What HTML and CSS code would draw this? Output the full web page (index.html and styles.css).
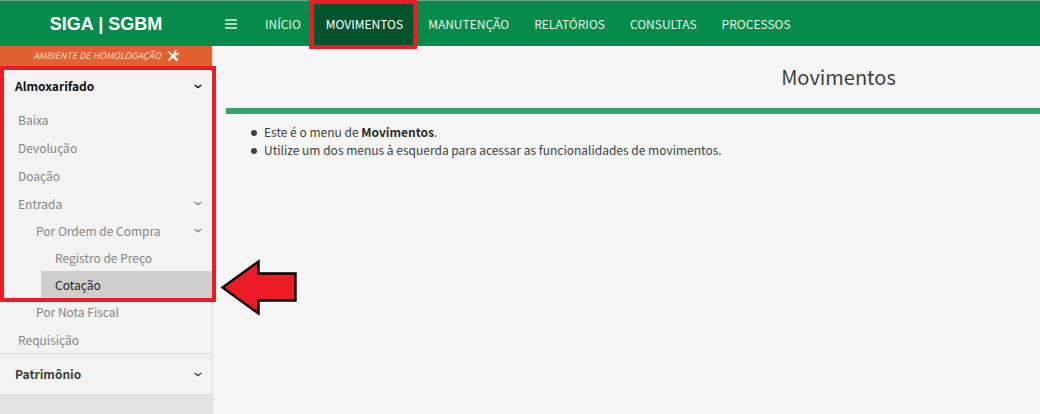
FILE: index.html
```html
<!DOCTYPE html>
<html lang="pt-BR">
<head>
<meta charset="utf-8">
<title>SIGA | SGBM</title>
<link rel="stylesheet" href="styles.css">
</head>
<body>
<svg class="sprite" aria-hidden="true">
  <symbol id="chevron" viewBox="0 0 8 5"><path d="M.7 1L4 3.600 7.300 1" fill="none" stroke="currentColor" stroke-width="1.3"/></symbol>
</svg>
<header class="topbar">
  <a class="brand" href="#">SIGA | SGBM</a>
  <button class="toggle" type="button" aria-label="Menu">
    <svg width="12" height="10" viewBox="0 0 12 10"><path d="M0 1h12M0 5h12M0 9h12" stroke="currentColor" stroke-width="1.7"/></svg>
  </button>
  <nav class="nav">
    <a href="#">INÍCIO</a>
    <a class="active" href="#">MOVIMENTOS</a>
    <a href="#">MANUTENÇÃO</a>
    <a href="#">RELATÓRIOS</a>
    <a href="#">CONSULTAS</a>
    <a href="#">PROCESSOS</a>
  </nav>
</header>
<div class="layout">
  <aside class="sidebar">
    <div class="ribbon"><em>AMBIENTE DE HOMOLOGAÇÃO</em>
      <svg width="12" height="12" viewBox="0 0 12 12" aria-hidden="true">
        <path d="M1.2 1.2L6 6" stroke="#fff" stroke-width="1.6"/>
        <path d="M6.5 6.5L10.6 10.6" stroke="#fff" stroke-width="2.6"/>
        <path d="M1.6 10.4L8.2 3.8" stroke="#fff" stroke-width="2"/>
        <path d="M10 .4L8.5 2l.2 1.3 1.3.2 1.6-1.6c.6 1.7-.5 3.6-2.4 3.5C7.400 5.300 6.300 4 6.700 2.300 7 .9 8.500 0 10 .4z" fill="#fff"/>
      </svg>
    </div>
    <section class="group current">
      <button class="head" type="button">Almoxarifado <svg class="chev"><use href="#chevron"/></svg></button>
      <ul class="menu">
        <li><a href="#">Baixa</a></li>
        <li><a href="#">Devolução</a></li>
        <li><a href="#">Doação</a></li>
        <li><a href="#">Entrada <svg class="chev"><use href="#chevron"/></svg></a>
          <ul class="sub">
            <li><a href="#">Por Ordem de Compra <svg class="chev"><use href="#chevron"/></svg></a>
              <ul class="leaf">
                <li><a href="#">Registro de Preço</a></li>
                <li><a class="selected" href="#">Cotação</a></li>
              </ul>
            </li>
            <li><a href="#">Por Nota Fiscal</a></li>
          </ul>
        </li>
        <li><a href="#">Requisição</a></li>
      </ul>
    </section>
    <section class="group">
      <button class="head" type="button">Patrimônio <svg class="chev"><use href="#chevron"/></svg></button>
    </section>
    <div class="frame"></div>
    <svg class="arrow" width="80" height="60" viewBox="0 0 80 60" aria-hidden="true">
      <path d="M3.500 29.500L39.500 3.500v12h37v27h-37v13z" fill="#ed1c24" stroke="#000" stroke-width="2.4"/>
    </svg>
  </aside>
  <main class="content">
    <h1>Movimentos</h1>
    <ul class="notes">
      <li>Este é o menu de <strong>Movimentos</strong>.</li>
      <li>Utilize um dos menus à esquerda para acessar as funcionalidades de movimentos.</li>
    </ul>
  </main>
</div>
</body>
</html>
```
FILE: styles.css
```css
* { box-sizing: border-box; }
body {
  margin: 0;
  min-height: 100vh;
  display: flex;
  flex-direction: column;
  background: #f6f6f6;
  color: #404040;
  font: 12px/18px "Noto Sans CJK SC", "Noto Sans", sans-serif;
}
a { color: inherit; text-decoration: none; }
ul { list-style: none; margin: 0; padding: 0; }
button { border: 0; background: none; color: inherit; font: inherit; }
.sprite { position: absolute; width: 0; height: 0; }

.topbar {
  display: flex;
  height: 46px;
  border-top: 1px solid #6fa58a;
  background: #068b4b;
  color: #e4f3e9;
}
.brand {
  width: 212px;
  font: bold 18px/46px "Liberation Sans", Arial, sans-serif;
  text-align: center;
  color: #fff;
}
.toggle { display: flex; align-items: center; padding: 0 13px; }
.nav { display: flex; gap: 1px; padding-left: 3px; }
.nav a { padding: 0 12px; line-height: 46px; }
.nav .active {
  position: relative;
  background: #03532c;
  color: #fff;
}
.nav .active::after {
  content: "";
  position: absolute;
  inset: -1px -2px -3px -5px;
  border: 4px solid #ed1c24;
}

.layout { display: flex; flex: 1; }
.sidebar {
  position: relative;
  width: 213px;
  flex: none;
  border-right: 1px solid #dcdcdf;
  background: #e4e4e4;
}
.ribbon {
  display: flex;
  align-items: center;
  justify-content: center;
  gap: 6px;
  height: 20px;
  background: #e36031;
  color: #fbdccb;
  font-size: 9px;
}
.group { border-bottom: 1px solid #dcdcdc; background: #f3f3f3; }
.head {
  display: flex;
  align-items: center;
  justify-content: space-between;
  width: 100%;
  height: 40px;
  padding: 0 10px 0 15px;
  font-weight: bold;
}
.current .head { color: #111; }
.chev { width: 8px; height: 5px; }
.menu { display: flex; flex-direction: column; gap: 1px; color: #858585; }
.menu a {
  display: flex;
  align-items: center;
  justify-content: space-between;
  height: 27px;
  padding: 0 10px 0 18px;
}
.menu .sub a { padding-left: 36px; }
.menu .leaf { padding-left: 41px; }
.menu .leaf a { padding-left: 14px; }
.menu .selected { background: #cecece; color: #222; }
.frame {
  position: absolute;
  top: 20px;
  left: 0;
  right: -4px;
  height: 236px;
  border: 4px solid #ed1c24;
}
.arrow { position: absolute; top: 212px; left: 219px; }

.content { flex: 1; padding-left: 13px; }
h1 {
  margin: 0;
  padding: 0 0 0 411px;
  border-bottom: 6px solid #34a36c;
  font-size: 20px;
  font-weight: normal;
  line-height: 62px;
  text-align: center;
}
.notes { padding: 9px 0 0 25px; }
.notes li::before {
  content: "";
  display: inline-block;
  width: 6px;
  height: 6px;
  margin-right: 7px;
  border-radius: 50%;
  background: #404040;
  vertical-align: 1px;
}
.notes strong { color: #2a2a2a; }
```
